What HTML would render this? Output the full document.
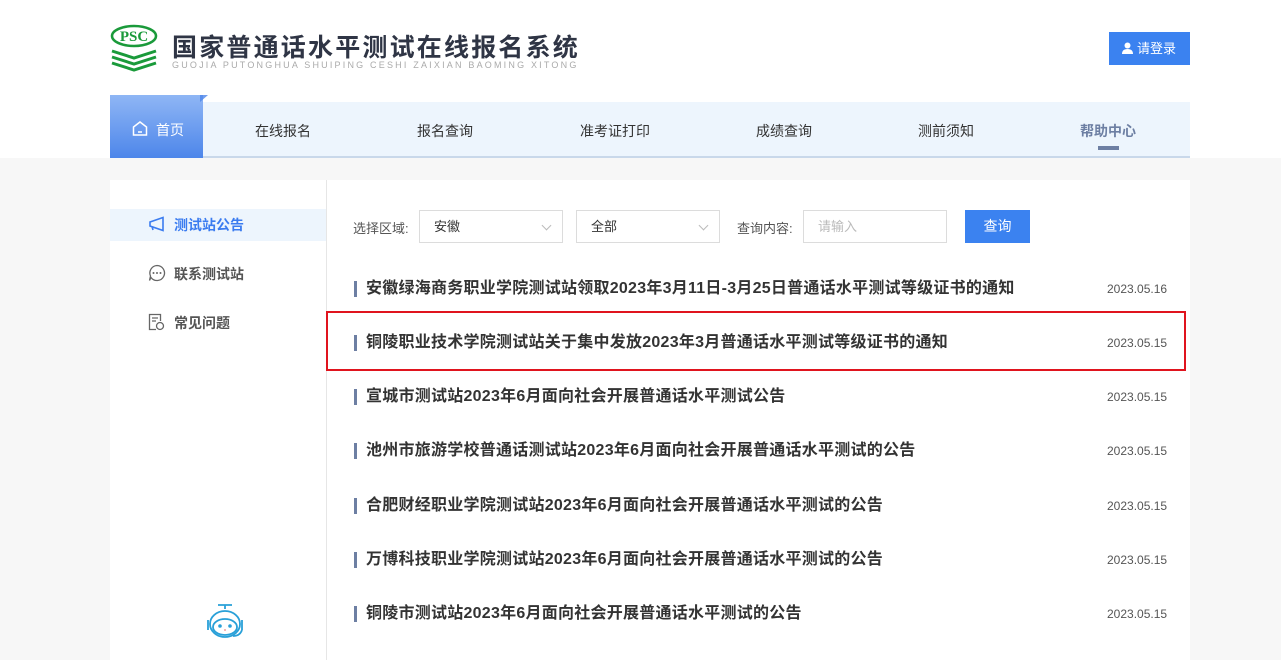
<!DOCTYPE html>
<html><head><meta charset="utf-8"><style>
*{margin:0;padding:0;box-sizing:border-box}
body{width:1281px;height:651px;overflow:hidden;background:#f7f7f7;font-family:"Liberation Sans","Noto Sans CJK SC",sans-serif;position:relative}
.top{position:absolute;left:0;top:0;width:1281px;height:158px;background:#fff}
.abs{position:absolute}
.nav{left:110px;top:102px;width:1080px;height:56px;background:#edf5fd;border-bottom:2px solid #c9d8ea}
.nav span{position:absolute;top:19px;font-size:14px;color:#333;transform:translateX(-50%)}
.home{left:110px;top:95px;width:93px;height:63px;background:linear-gradient(#8fb6f5,#4d86ea);color:#fff;font-size:14px}
.card{left:110px;top:180px;width:1080px;height:480px;background:#fff}
.side{left:110px;top:180px;width:217px;height:480px;border-right:1px solid #e6e6e6}
.si{position:absolute;left:0;width:216px;height:32px;font-size:14px;font-weight:bold;color:#555;line-height:32px;padding-left:64px}
.sel{position:absolute;top:210px;height:33px;border:1px solid #dcdcdc;font-size:13px;color:#333;line-height:31px;padding-left:14px;background:#fff}
.row{position:absolute;left:354px;font-size:16px;font-weight:bold;color:#333;padding-left:9px;border-left:3px solid #6d7fa3;line-height:16px;height:16px;letter-spacing:0.25px;white-space:nowrap}
.date{position:absolute;left:1107px;font-size:12px;color:#555}
.arr{position:absolute;right:12px;top:11px;width:7px;height:7px;border-right:1px solid #bbb;border-bottom:1px solid #bbb;transform:rotate(45deg)}
</style></head><body>
<div class="top"></div>
<svg class="abs" style="left:110px;top:24px" width="50" height="50" viewBox="0 0 50 50">
<ellipse cx="24" cy="12" rx="22" ry="10" fill="none" stroke="#1a9a3a" stroke-width="2.5"/>
<text x="24" y="17" font-family="Liberation Serif" font-weight="bold" font-size="15" fill="#1a9a3a" text-anchor="middle">PSC</text>
<g fill="none" stroke="#1a9a3a" stroke-width="3"><path d="M2 27 L24 34 L46 27"/><path d="M2 33 L24 40 L46 33"/><path d="M2 39 L24 46 L46 39"/></g>
</svg>
<div class="abs" style="left:172px;top:28px;font-size:25px;color:#2f3545;letter-spacing:2.2px;font-weight:bold;-webkit-text-stroke:0px">国家普通话水平测试在线报名系统</div>
<div class="abs" style="left:172px;top:60px;font-size:9px;color:#aaa;letter-spacing:2.2px;white-space:nowrap">GUOJIA PUTONGHUA SHUIPING CESHI ZAIXIAN BAOMING XITONG</div>
<div class="abs" style="left:1109px;top:32px;width:81px;height:33px;background:#3b82f0;color:#fff;font-size:13px;line-height:33px;padding-left:28px">请登录
<svg class="abs" style="left:13px;top:10px" width="11" height="12" viewBox="0 0 11 12"><circle cx="5.5" cy="3.5" r="3" fill="#fff"/><path d="M0 12 Q0 7 5.5 7 Q11 7 11 12Z" fill="#fff"/></svg></div>
<div class="abs nav">
<span style="left:173px">在线报名</span><span style="left:335px">报名查询</span><span style="left:505px">准考证打印</span><span style="left:674px">成绩查询</span><span style="left:836px">测前须知</span><span style="left:998px;color:#6d7fa3;font-weight:bold">帮助中心</span>
<div class="abs" style="left:988px;top:44px;width:21px;height:4px;background:#6d7fa3"></div>
</div>
<div class="abs home"><svg class="abs" style="left:22px;top:26px" width="16" height="15" viewBox="0 0 16 15"><path d="M1.5 6 L8 1 L14.5 6 V14 H1.5Z" fill="none" stroke="#fff" stroke-width="1.5"/><path d="M6 11 H10" stroke="#fff" stroke-width="1.5"/></svg><span class="abs" style="left:46px;top:25px">首页</span></div>
<div class="abs" style="left:200px;top:95px;width:0;height:0;border-left:8px solid #4d86ea;border-bottom:7px solid transparent;opacity:.8"></div>
<div class="abs card"></div>
<div class="abs side">
<div class="si" style="top:29px;background:#edf5fd;color:#3b7cf0">测试站公告</div>
<div class="si" style="top:78px">联系测试站</div>
<div class="si" style="top:127px">常见问题</div>
<svg class="abs" style="left:38px;top:36px" width="18" height="16" viewBox="0 0 18 16"><path d="M2 6 L15 1.5 V14.5 L2 10Z M4 10.5 L5 14" fill="none" stroke="#3b7cf0" stroke-width="1.6"/></svg>
<svg class="abs" style="left:38px;top:84px" width="18" height="18" viewBox="0 0 18 18"><path d="M9 1.5 A7.5 7.5 0 1 1 3 13.5 L1.5 16.5 L2.5 12 A7.5 7.5 0 0 1 9 1.5Z" fill="none" stroke="#666" stroke-width="1.3"/><circle cx="5.5" cy="9" r="1" fill="#666"/><circle cx="9" cy="9" r="1" fill="#666"/><circle cx="12.5" cy="9" r="1" fill="#666"/></svg>
<svg class="abs" style="left:38px;top:133px" width="17" height="18" viewBox="0 0 17 18"><path d="M8 16.5 H1.5 V1.5 H12.5 V8" fill="none" stroke="#666" stroke-width="1.3"/><path d="M4 5 H10 M4 8 H8" stroke="#666" stroke-width="1.3"/><circle cx="12" cy="13" r="3.5" fill="none" stroke="#666" stroke-width="1.3"/></svg>
<svg class="abs" style="left:92px;top:423px" width="46" height="38" viewBox="0 0 46 38"><g fill="none" stroke="#29a0d8" stroke-width="1.8"><path d="M16 2 H30 M23 2 V6"/><ellipse cx="23" cy="21" rx="15" ry="13"/><ellipse cx="23" cy="24" rx="12" ry="8"/><path d="M6 17 V27 M40 17 V27 M40 27 Q38 33 31 33"/></g><circle cx="18" cy="23" r="1.8" fill="#29a0d8"/><circle cx="28" cy="23" r="1.8" fill="#29a0d8"/><circle cx="23" cy="27" r="1" fill="#f4a0a0"/></svg>
</div>
<div class="abs" style="left:353px;top:218px;font-size:13px;color:#555">选择区域:</div>
<div class="sel" style="left:419px;width:144px">安徽<span class="arr"></span></div>
<div class="sel" style="left:576px;width:144px">全部<span class="arr"></span></div>
<div class="abs" style="left:737px;top:218px;font-size:13px;color:#555">查询内容:</div>
<div class="sel" style="left:803px;width:144px;color:#bbb">请输入</div>
<div class="abs" style="left:965px;top:210px;width:65px;height:33px;background:#3b82f0;color:#fff;font-size:14px;line-height:33px;text-align:center">查询</div>
<div class="abs" style="left:326px;top:311px;width:860px;height:60px;border:2px solid #e0141e"></div>
<div class="row" style="top:281px">安徽绿海商务职业学院测试站领取2023年3月11日-3月25日普通话水平测试等级证书的通知</div><div class="date" style="top:282px">2023.05.16</div>
<div class="row" style="top:335px">铜陵职业技术学院测试站关于集中发放2023年3月普通话水平测试等级证书的通知</div><div class="date" style="top:336px">2023.05.15</div>
<div class="row" style="top:389px">宣城市测试站2023年6月面向社会开展普通话水平测试公告</div><div class="date" style="top:390px">2023.05.15</div>
<div class="row" style="top:443px">池州市旅游学校普通话测试站2023年6月面向社会开展普通话水平测试的公告</div><div class="date" style="top:444px">2023.05.15</div>
<div class="row" style="top:498px">合肥财经职业学院测试站2023年6月面向社会开展普通话水平测试的公告</div><div class="date" style="top:499px">2023.05.15</div>
<div class="row" style="top:552px">万博科技职业学院测试站2023年6月面向社会开展普通话水平测试的公告</div><div class="date" style="top:553px">2023.05.15</div>
<div class="row" style="top:606px">铜陵市测试站2023年6月面向社会开展普通话水平测试的公告</div><div class="date" style="top:607px">2023.05.15</div>
</body></html>
